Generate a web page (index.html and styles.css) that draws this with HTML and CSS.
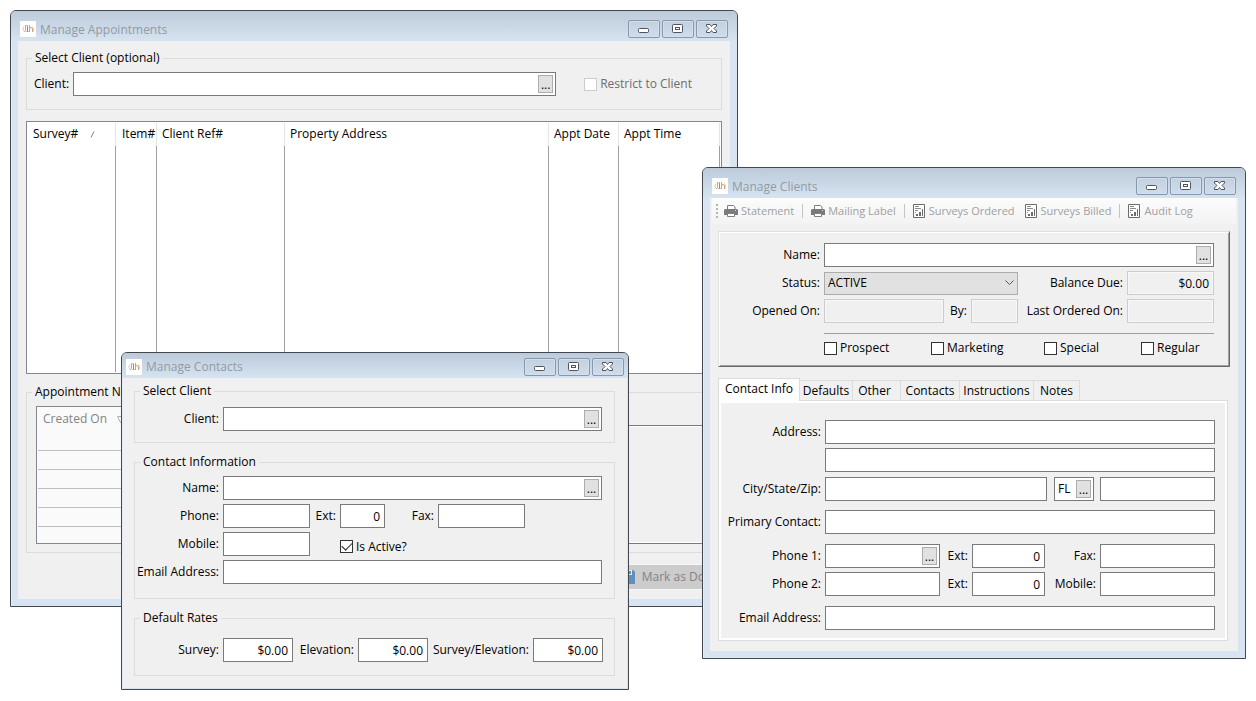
FILE: index.html
```html
<!DOCTYPE html>
<html lang="en">
<head>
<meta charset="utf-8">
<title>Survey Manager</title>
<link rel="stylesheet" href="styles.css">
</head>
<body>
<svg class="sprites" aria-hidden="true">
  <symbol id="logo" viewBox="0 0 16 16">
    <path fill="none" stroke="#f2c79c" d="M4 5.500Q1.500 8 4 10.500M12.500 5.500Q15 8.500 12.500 11"/>
    <path fill="none" stroke="#d9a06a" d="M5.500 4.500v5q0 1-1.500 1M9.500 4v7M9.500 7q3-1.500 3 1v3"/>
    <path fill="none" stroke="#b08a68" d="M7.500 4v6M6.500 10.500h2"/>
    <path fill="none" stroke="#e6bd93" d="M5 4.500h3"/>
  </symbol>
  <symbol id="min" viewBox="0 0 14 12">
    <rect x="1.500" y="5.500" width="10" height="4" rx="1" fill="#fff" stroke="#4d5360"/>
  </symbol>
  <symbol id="max" viewBox="0 0 14 12">
    <rect x="1.500" y="1.500" width="10" height="8" rx="1" fill="#fff" stroke="#4d5360"/>
    <rect x="4.500" y="4.500" width="4" height="2" fill="#fff" stroke="#4d5360"/>
  </symbol>
  <symbol id="close" viewBox="0 0 14 12">
    <path fill="#fff" stroke="#4d5360" stroke-linejoin="round" d="M1.500 1.500h3.500l1.500 2 1.500-2h3.500v1.500L9 5.500l2.500 2.500v1.500H8l-1.500-2-1.500 2H1.500V8L4 5.500 1.500 3z"/>
  </symbol>
  <symbol id="printer" viewBox="0 0 14 14">
    <path fill="#fff" stroke="#7f7f7f" d="M3.500 5V1.500h6l1.500 1.500v2"/>
    <path fill="#7a7a7a" d="M1 5h12l1 1v5H0V6z"/>
    <path fill="#fff" stroke="#7f7f7f" d="M3.500 9.500h7v3h-7z"/>
    <path fill="#ddd" d="M11 6h1v1h-1z"/>
  </symbol>
  <symbol id="report" viewBox="0 0 12 14">
    <path fill="#fff" stroke="#6c6c6c" d="M.5.5h11v13H.5z"/>
    <path fill="none" stroke="#8a8a8a" d="M2 2.500h4M2 4.500h6M2 6.500h3M2 8.500h1"/>
    <path fill="#6c6c6c" d="M3 10h2v2H3zM6 8h2v4H6zM9 5h1v7H9z"/>
  </symbol>
</svg>

<main class="desktop">
  <section class="window appointments" aria-label="Manage Appointments">
    <header class="titlebar">
      <svg class="logo"><use href="#logo"/></svg>
      <h1 class="title">Manage Appointments</h1>
      <button class="winbtn" aria-label="Minimize"><svg><use href="#min"/></svg></button>
      <button class="winbtn" aria-label="Maximize"><svg><use href="#max"/></svg></button>
      <button class="winbtn" aria-label="Close"><svg><use href="#close"/></svg></button>
    </header>
    <div class="client-area">
      <fieldset class="group pick">
        <legend>Select Client (optional)</legend>
        <div class="row">
          <label class="label" for="a-client">Client:</label>
          <span class="lookup pick-field"><input id="a-client"><button aria-label="Find client">...</button></span>
          <label class="check muted"><input type="checkbox" disabled>Restrict to Client</label>
        </div>
      </fieldset>
      <div class="listbox">
        <table class="list">
          <colgroup><col class="c-survey"><col class="c-item"><col class="c-ref"><col><col class="c-date"><col class="c-time"></colgroup>
          <thead><tr><th>Survey#<svg class="sort" viewBox="0 0 5 7"><path d="M1 6.500L4 .5"/></svg></th><th>Item#</th><th>Client Ref#</th><th>Property Address</th><th>Appt Date</th><th>Appt Time</th></tr></thead>
          <tbody><tr><td></td><td></td><td></td><td></td><td></td><td></td></tr></tbody>
        </table>
      </div>
      <fieldset class="group notes">
        <legend>Appointment Notes</legend>
        <div class="notes-body">
          <div class="notes-list">
            <table class="lined">
              <thead><tr><th>Created On<svg class="sort desc" viewBox="0 0 7 7"><path d="M.5.5h6L3.500 6.500z"/></svg></th></tr></thead>
              <tbody><tr><td></td></tr><tr><td></td></tr><tr><td></td></tr><tr><td></td></tr><tr><td></td></tr></tbody>
            </table>
          </div>
          <textarea class="memo" aria-label="Note" disabled></textarea>
        </div>
      </fieldset>
      <div class="actions">
        <button class="action" disabled>
          <svg class="floppy" viewBox="0 0 14 14"><path fill="#5f8fba" d="M0 0h12l2 2v12H0z"/><path fill="#e6eef5" d="M3 0h8v5H3z"/><path fill="#5f8fba" d="M8 1h2v3H8z"/></svg>
          Mark as Done
        </button>
      </div>
    </div>
  </section>

  <section class="window clients" aria-label="Manage Clients">
    <header class="titlebar">
      <svg class="logo"><use href="#logo"/></svg>
      <h1 class="title">Manage Clients</h1>
      <button class="winbtn" aria-label="Minimize"><svg><use href="#min"/></svg></button>
      <button class="winbtn" aria-label="Maximize"><svg><use href="#max"/></svg></button>
      <button class="winbtn" aria-label="Close"><svg><use href="#close"/></svg></button>
    </header>
    <div class="client-area">
      <nav class="toolbar">
        <span class="grip"></span>
        <button class="tool" disabled><svg class="printer"><use href="#printer"/></svg>Statement</button>
        <span class="bar"></span>
        <button class="tool" disabled><svg class="printer"><use href="#printer"/></svg>Mailing Label</button>
        <span class="bar"></span>
        <button class="tool" disabled><svg class="report"><use href="#report"/></svg>Surveys Ordered</button>
        <button class="tool next" disabled><svg class="report"><use href="#report"/></svg>Surveys Billed</button>
        <span class="bar"></span>
        <button class="tool" disabled><svg class="report"><use href="#report"/></svg>Audit Log</button>
      </nav>

      <div class="panel">
        <div class="row">
          <label class="label" for="c-name">Name:</label>
          <span class="lookup grow"><input id="c-name"><button aria-label="Find client">...</button></span>
        </div>
        <div class="row">
          <label class="label" for="c-status">Status:</label>
          <span class="combo grow">
            <select id="c-status"><option>ACTIVE</option></select>
            <svg viewBox="0 0 9 6"><path d="M.5.5l4 4 4-4"/></svg>
          </span>
          <label class="label wide" for="c-balance">Balance Due:</label>
          <input class="field ro num money" id="c-balance" value="$0.00" readonly>
        </div>
        <div class="row">
          <label class="label" for="c-opened">Opened On:</label>
          <input class="field ro grow" id="c-opened" readonly>
          <label class="label by" for="c-by">By:</label>
          <input class="field ro by-field" id="c-by" readonly>
          <label class="label wide" for="c-last">Last Ordered On:</label>
          <input class="field ro money" id="c-last" readonly>
        </div>
        <div class="flags">
          <label class="check"><input type="checkbox">Prospect</label>
          <label class="check"><input type="checkbox">Marketing</label>
          <label class="check"><input type="checkbox">Special</label>
          <label class="check"><input type="checkbox">Regular</label>
        </div>
      </div>

      <div class="tabs" role="tablist">
        <button class="tab on" role="tab" aria-selected="true">Contact Info</button>
        <button class="tab t-defaults" role="tab">Defaults</button>
        <button class="tab t-other" role="tab">Other</button>
        <button class="tab t-contacts" role="tab">Contacts</button>
        <button class="tab t-instructions" role="tab">Instructions</button>
        <button class="tab t-notes" role="tab">Notes</button>
      </div>
      <div class="page" role="tabpanel">
        <div class="row">
          <label class="label" for="c-addr">Address:</label>
          <input class="field grow" id="c-addr">
        </div>
        <div class="row">
          <span class="label"></span>
          <input class="field grow" aria-label="Address line 2">
        </div>
        <div class="row place">
          <label class="label" for="c-city">City/State/Zip:</label>
          <input class="field grow" id="c-city">
          <span class="lookup state"><input aria-label="State" value="FL"><button aria-label="Find state">...</button></span>
          <input class="field phone" aria-label="Zip">
        </div>
        <div class="row primary">
          <label class="label" for="c-primary">Primary Contact:</label>
          <input class="field grow" id="c-primary">
        </div>
        <div class="row apart">
          <label class="label" for="c-ph1">Phone 1:</label>
          <span class="lookup grow"><input id="c-ph1"><button aria-label="Find phone">...</button></span>
          <label class="label ext" for="c-ext1">Ext:</label>
          <input class="field num ext-field" id="c-ext1" value="0">
          <label class="label short" for="c-fax">Fax:</label>
          <input class="field phone" id="c-fax">
        </div>
        <div class="row">
          <label class="label" for="c-ph2">Phone 2:</label>
          <input class="field grow" id="c-ph2">
          <label class="label ext" for="c-ext2">Ext:</label>
          <input class="field num ext-field" id="c-ext2" value="0">
          <label class="label short" for="c-mobile">Mobile:</label>
          <input class="field phone" id="c-mobile">
        </div>
        <div class="row apart">
          <label class="label" for="c-email">Email Address:</label>
          <input class="field grow" id="c-email">
        </div>
      </div>
    </div>
  </section>

  <section class="window contacts" aria-label="Manage Contacts">
    <header class="titlebar">
      <svg class="logo"><use href="#logo"/></svg>
      <h1 class="title">Manage Contacts</h1>
      <button class="winbtn" aria-label="Minimize"><svg><use href="#min"/></svg></button>
      <button class="winbtn" aria-label="Maximize"><svg><use href="#max"/></svg></button>
      <button class="winbtn" aria-label="Close"><svg><use href="#close"/></svg></button>
    </header>
    <div class="client-area">
      <fieldset class="group">
        <legend>Select Client</legend>
        <div class="row">
          <label class="label" for="k-client">Client:</label>
          <span class="lookup grow"><input id="k-client"><button aria-label="Find client">...</button></span>
        </div>
      </fieldset>
      <fieldset class="group info">
        <legend>Contact Information</legend>
        <div class="row">
          <label class="label" for="k-name">Name:</label>
          <span class="lookup grow"><input id="k-name"><button aria-label="Find contact">...</button></span>
        </div>
        <div class="row">
          <label class="label" for="k-phone">Phone:</label>
          <input class="field tel" id="k-phone">
          <label class="label after" for="k-ext">Ext:</label>
          <input class="field num ext-small" id="k-ext" value="0">
          <label class="label fax" for="k-fax">Fax:</label>
          <input class="field tel" id="k-fax">
        </div>
        <div class="row">
          <label class="label" for="k-mobile">Mobile:</label>
          <input class="field tel" id="k-mobile">
          <label class="check active"><input type="checkbox" checked>Is Active?</label>
        </div>
        <div class="row">
          <label class="label" for="k-email">Email Address:</label>
          <input class="field grow" id="k-email">
        </div>
      </fieldset>
      <fieldset class="group rates">
        <legend>Default Rates</legend>
        <div class="row">
          <label class="label" for="k-survey">Survey:</label>
          <input class="field num grow" id="k-survey" value="$0.00">
          <label class="label elev" for="k-elev">Elevation:</label>
          <input class="field num grow" id="k-elev" value="$0.00">
          <label class="label both" for="k-both">Survey/Elevation:</label>
          <input class="field num grow" id="k-both" value="$0.00">
        </div>
      </fieldset>
    </div>
  </section>
</main>
</body>
</html>
```
FILE: styles.css
```css
* { box-sizing: border-box; }

body {
  margin: 0;
  background: #fff;
  color: #000;
  font: 12px/16px "Open Sans", "Noto Sans", sans-serif;
}

button, input, select, textarea {
  margin: 0;
  font: inherit;
  color: inherit;
  border-radius: 0;
}

.sprites { display: none; }

.desktop {
  position: relative;
  min-width: 1256px;
  min-height: 701px;
}

/* Windows */
.window {
  position: absolute;
  padding: 0 7px 7px;
  border: 1px solid #43474f;
  border-radius: 6px 6px 0 0;
  background: #d8e4f1;
  box-shadow: inset 1px 1px 0 #e4ecf5;
}
.appointments { top: 10px; left: 10px; right: 518px; }
.clients { top: 167px; left: 702px; right: 10px; }
.contacts { top: 352px; left: 121px; right: 627px; padding: 0 1px 1px; }

.titlebar {
  display: flex;
  align-items: center;
  gap: 2px;
  height: 30px;
  margin: 0 -7px;
  padding: 6px 9px 0;
  border-radius: 5px 5px 0 0;
  background: linear-gradient(#bccad9, #d6e4f2);
}
.contacts .titlebar { height: 25px; margin: 0 -1px; padding: 2px 4px 0; }

.logo { width: 16px; height: 16px; background: #fff; }
.title {
  flex: 1;
  margin: 0 0 0 2px;
  padding-top: 1px;
  font-size: 12px;
  font-weight: 400;
  color: #939aa2;
}
.winbtn {
  display: flex;
  align-items: center;
  justify-content: center;
  width: 32px;
  height: 18px;
  padding: 0;
  border: 1px solid #8797ad;
  border-radius: 2px;
  background: linear-gradient(#c3d0de, #cfdceb);
  box-shadow: inset 0 0 0 1px #d4dfeb;
}
.winbtn svg { width: 14px; height: 12px; }

.client-area { background: #f0f0f0; }
.appointments .client-area { padding: 9px 8px 10px; }
.contacts .client-area { padding: 5px 12px 12px 11px; }
.clients .client-area { padding: 0 8px 10px; }

/* Group boxes */
.group {
  min-width: 0;
  margin: 0;
  padding: 8px 12px 11px 0;
  border: 1px solid #dcdcdc;
}
.group legend { margin-left: 5px; padding: 0 3px; }
.group + .group { margin-top: 11px; }

/* Rows of labels and fields */
.row { display: flex; align-items: center; }
.row + .row { margin-top: 4px; }
.label {
  flex: none;
  text-align: right;
  white-space: nowrap;
  padding-right: 4px;
}
.grow { flex: 1; min-width: 0; }

.field, .lookup {
  height: 24px;
  border: 1px solid #7a7a7a;
  background: #fff;
}
.field { padding: 0 4px; }
.num { text-align: right; }
.ro { border-color: #ccc; background: #f0f0f0; box-shadow: inset 0 0 0 1px #f8f8f8; }
.lookup { display: flex; padding: 2px; }
.lookup input {
  flex: 1;
  min-width: 0;
  padding: 0 1px;
  border: 0;
  background: none;
}
.lookup button {
  width: 15px;
  height: 18px;
  padding: 0;
  border: 1px solid #adadad;
  background: #e1e1e1;
  line-height: 18px;
}

.check { display: flex; align-items: center; gap: 3px; white-space: nowrap; }
.check input {
  display: grid;
  place-items: center;
  appearance: none;
  width: 13px;
  height: 13px;
  border: 1px solid #333;
  background: #fff;
}
.check input:checked::after {
  content: "";
  width: 9px;
  height: 5px;
  margin-bottom: 3px;
  border: solid #222;
  border-width: 0 0 1px 1px;
  transform: rotate(-45deg);
}
.muted { color: #6d6d6d; }
.muted input { border-color: #ccc; }

/* Appointments */
.pick { padding: 6px 29px 13px 7px; }
.pick legend { margin-left: -2px; }
.pick .label { width: 39px; text-align: left; }
.pick-field { flex: 1; margin-right: 28px; }

.listbox {
  margin-top: 11px;
  padding: 1px 1px 1px 0;
  border: 1px solid #828790;
  background: #fff;
}
.list { width: 100%; border-collapse: separate; border-spacing: 0; table-layout: fixed; }
.list th {
  height: 23px;
  padding: 0 0 1px 6px;
  border-right: 1px solid #e5e5e5;
  font-weight: 400;
  text-align: left;
  white-space: nowrap;
}
.list td { height: 226px; padding: 0; border-right: 1px solid #a0a0a0; }
.c-survey { width: 89px; }
.c-item { width: 41px; }
.c-ref { width: 128px; }
.c-date { width: 70px; }
.c-time { width: 101px; }
.list th:nth-child(n+3) { padding-left: 5px; }
.sort {
  width: 5px;
  height: 7px;
  margin-left: 12px;
  fill: none;
  stroke: #808080;
}
.sort.desc { width: 7px; margin-left: 10px; stroke: #b0b0b0; }

.notes { margin-top: 10px; padding: 6px 9px 8px; }
.notes legend { margin-left: -4px; }
.notes-body { display: flex; align-items: flex-end; gap: 12px; }
.notes-list { flex: 1; height: 138px; padding: 0 1px; border: 1px solid #828790; background: #fafafa; }
.lined { width: 100%; border-collapse: separate; border-spacing: 0; }
.lined th {
  height: 24px;
  padding: 0 0 0 5px;
  color: #838383;
  font-weight: 400;
  text-align: left;
}
.lined td { height: 19px; padding: 0; border-bottom: 1px solid #bfbfbf; }
.lined tr:first-child td { height: 20px; }
.memo {
  flex: 1;
  height: 119px;
  border: 1px solid #7a7a7a;
  background: #f0f0f0;
  box-shadow: inset 0 0 0 1px #fff;
  resize: none;
}
.actions { display: flex; justify-content: flex-end; margin-top: 12px; }
.action {
  display: flex;
  align-items: center;
  gap: 7px;
  height: 24px;
  padding: 0 3px;
  border: 0;
  background: #ccc;
  box-shadow: 0 0 0 1px #f8f8f8;
  color: #838383;
}
.floppy { width: 14px; height: 14px; }

/* Contacts */
.contacts .label:first-child { width: 88px; padding-right: 4px; }
.contacts .row > .label:first-child + * { margin-left: 0; }
.contacts .info { padding-top: 6px; padding-bottom: 14px; }
.contacts .rates { padding: 12px 11px 13px 0; }
.tel { width: 87px; }
.after { width: 30px; }
.ext-small { width: 45px; }
.fax { width: 53px; }
.active { margin: 5px 0 0 30px; }
.elev { width: 65px; }
.both { width: 105px; }

/* Clients */
.toolbar {
  display: flex;
  align-items: center;
  height: 26px;
  margin: 0 -6px 7px;
  padding-left: 4px;
  background: linear-gradient(#fcfcfc, #f3f3f3);
}
.grip { width: 2px; height: 14px; margin-right: 6px; background: repeating-linear-gradient(#b4b4b4 0 2px, transparent 2px 4px); }
.tool {
  display: flex;
  align-items: center;
  gap: 3px;
  padding: 0;
  border: 0;
  background: none;
  font-size: 11px;
  color: #a0a0a0;
  white-space: nowrap;
}
.printer { width: 14px; height: 14px; }
.report { width: 12px; height: 14px; margin-right: 1px; }
.bar { width: 1px; height: 14px; margin: 0 8px; background: #c4c4c4; }
.next { margin-left: 10px; }

.panel {
  padding: 11px 15px 10px 0;
  border: 1px solid;
  border-color: #e0e0e0 #696969 #696969 #e0e0e0;
  box-shadow: inset 1px 1px 0 #fff, inset -1px -1px 0 #a0a0a0;
}
.panel .label { width: 105px; }
.panel .by { width: 27px; }
.panel .by-field { width: 47px; }
.panel .wide { width: 109px; }
.money { width: 87px; }
.combo { display: grid; align-items: center; height: 24px; }
.combo select, .combo svg { grid-area: 1 / 1; }
.combo select {
  appearance: none;
  width: 100%;
  height: 23px;
  padding: 0 3px;
  border: 1px solid #adadad;
  background: #e1e1e1;
}
.combo svg {
  justify-self: end;
  width: 9px;
  height: 6px;
  margin-right: 4px;
  fill: none;
  stroke: #555;
  pointer-events: none;
}
.flags {
  display: grid;
  grid-template-columns: 107fr 113fr 97fr 73fr;
  margin: 10px 0 0 105px;
  padding-top: 6px;
  border-top: 1px solid #a0a0a0;
}

.tabs { display: flex; align-items: flex-end; margin-top: 11px; }
.tab {
  height: 20px;
  padding: 0;
  border: 1px solid #dcdcdc;
  border-width: 1px 1px 0 0;
  background: #f0f0f0;
  white-space: nowrap;
}
.tab.on {
  width: 82px;
  height: 23px;
  margin-bottom: -1px;
  padding-bottom: 2px;
  border-left-width: 1px;
  background: #fff;
  z-index: 1;
}
.t-defaults { width: 53px; }
.t-other { width: 48px; padding-right: 4px; }
.t-contacts { width: 59px; }
.t-instructions { width: 74px; }
.t-notes { width: 46px; }
.page {
  margin-right: 2px;
  padding: 19px 12px 10px 0;
  border: 1px solid #dcdcdc;
  box-shadow: inset 0 0 0 2px #fff;
}
.page .label { width: 106px; }
.page .place { margin-top: 5px; }
.page .primary { margin-top: 9px; }
.page .apart { margin-top: 10px; }
.page .ext { width: 32px; }
.ext-field { width: 73px; }
.page .short { width: 55px; }
.phone { width: 115px; }
.state { width: 40px; margin: 0 6px 0 7px; }
```
